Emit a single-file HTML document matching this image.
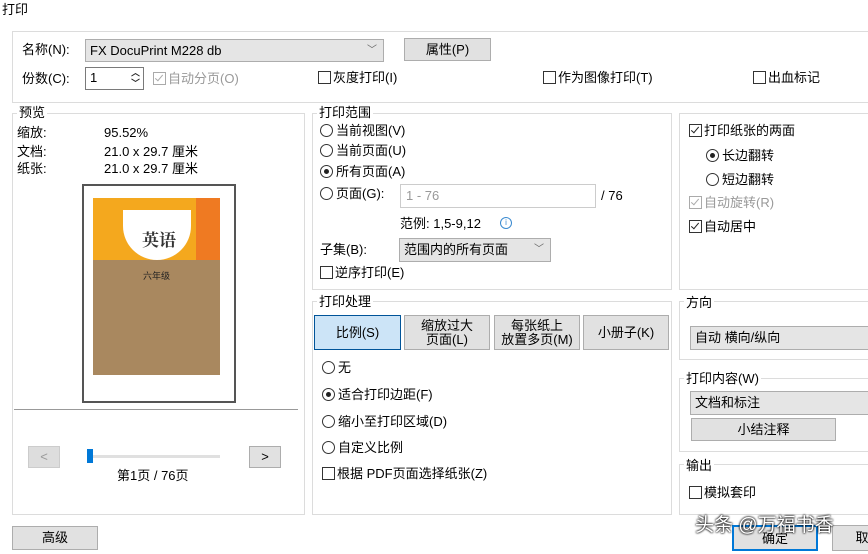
<!DOCTYPE html>
<html><head><meta charset="utf-8"><style>
body{margin:0;width:868px;height:554px;background:#fff;position:relative;overflow:hidden;font-family:"Liberation Sans","Noto Sans CJK SC",sans-serif;font-size:13px;line-height:16px;color:#000}
.a{position:absolute;white-space:nowrap}
.p{position:absolute;border:1px solid #dcdcdc}
.lg{position:absolute;background:#fff;padding:0 2px;font-size:13px}
.btn{position:absolute;background:#e1e1e1;border:1px solid #adadad;text-align:center;box-sizing:border-box}
.cb{display:inline-block;width:11px;height:11px;border:1px solid #333;vertical-align:-2px;margin-right:2px;background:#fff;position:relative}
.rb{display:inline-block;width:11px;height:11px;border:1px solid #333;border-radius:50%;vertical-align:-2px;margin-right:3px;background:#fff;position:relative}
.rb.on:after{content:"";position:absolute;left:3px;top:3px;width:5px;height:5px;border-radius:50%;background:#222}
.cb.on:after{content:"";position:absolute;left:3px;top:0px;width:3px;height:7px;border:solid #222;border-width:0 1.5px 1.5px 0;transform:rotate(40deg)}
.g{color:#999}.g .cb{border-color:#aaa}.g .cb:after{border-color:#aaa}
.sel{position:absolute;background:#e5e5e5;border:1px solid #adadad;box-sizing:border-box;padding-left:4px}
</style></head><body>
<div class="a" style="left:2px;top:2px">打印</div>
<div class="p" style="left:12px;top:31px;width:870px;height:70px"></div>
<div class="a" style="left:22px;top:42px">名称(N):</div>
<div class="sel" style="left:85px;top:39px;width:299px;height:23px;line-height:21px">FX DocuPrint M228 db<span style="position:absolute;right:6px;color:#666;font-size:10px">﹀</span></div>
<div class="btn" style="left:404px;top:38px;width:87px;height:23px;line-height:21px">属性(P)</div>
<div class="a" style="left:22px;top:71px">份数(C):</div>
<div style="position:absolute;left:85px;top:67px;width:59px;height:23px;border:1px solid #7a7a7a;box-sizing:border-box;padding:2px 4px">1<span style="position:absolute;right:3px;top:0;font-size:9px;line-height:10px;color:#222;font-weight:bold">︿<br>﹀</span></div>
<div class="a g" style="left:153px;top:71px"><span class="cb on"></span>自动分页(O)</div>
<div class="a" style="left:318px;top:70px"><span class="cb"></span>灰度打印(I)</div>
<div class="a" style="left:543px;top:70px"><span class="cb"></span>作为图像打印(T)</div>
<div class="a" style="left:753px;top:70px"><span class="cb"></span>出血标记</div>

<div class="p" style="left:12px;top:113px;width:291px;height:400px"></div>
<div class="lg" style="left:17px;top:105px">预览</div>
<div class="a" style="left:17px;top:125px">缩放:</div><div class="a" style="left:104px;top:125px">95.52%</div>
<div class="a" style="left:17px;top:144px">文档:</div><div class="a" style="left:104px;top:144px">21.0 x 29.7 厘米</div>
<div class="a" style="left:17px;top:161px">纸张:</div><div class="a" style="left:104px;top:161px">21.0 x 29.7 厘米</div>
<div style="position:absolute;left:82px;top:184px;width:150px;height:215px;border:2px solid #555;background:#fff"></div>
<div style="position:absolute;left:93px;top:198px;width:127px;height:177px;background:#a9885f"></div>
<div style="position:absolute;left:93px;top:198px;width:127px;height:62px;background:#f4a81e"></div>
<div style="position:absolute;left:196px;top:198px;width:24px;height:62px;background:#ef7a22"></div>
<div style="position:absolute;left:123px;top:210px;width:68px;height:50px;background:#fff;border-radius:0 0 34px 34px"></div>
<div class="a" style="left:142px;top:229px;font-family:'Noto Serif CJK SC',serif;font-weight:bold;font-size:17px;line-height:20px;color:#333">英语</div>
<div class="a" style="left:143px;top:268px;font-size:9px;color:#222">六年级</div>
<div style="position:absolute;left:14px;top:409px;width:284px;height:1px;background:#999"></div>
<div class="btn" style="left:28px;top:446px;width:32px;height:22px;line-height:20px;color:#999;background:#ddd;border-color:#ccc">&lt;</div>
<div style="position:absolute;left:88px;top:455px;width:132px;height:3px;background:#e0e0e0"></div>
<div style="position:absolute;left:87px;top:449px;width:6px;height:14px;background:#0078d7"></div>
<div class="btn" style="left:249px;top:446px;width:32px;height:22px;line-height:20px">&gt;</div>
<div class="a" style="left:117px;top:468px">第1页 / 76页</div>

<div class="p" style="left:312px;top:113px;width:358px;height:175px"></div>
<div class="lg" style="left:317px;top:105px">打印范围</div>
<div class="a" style="left:320px;top:123px"><span class="rb"></span>当前视图(V)</div>
<div class="a" style="left:320px;top:143px"><span class="rb"></span>当前页面(U)</div>
<div class="a" style="left:320px;top:164px"><span class="rb on"></span>所有页面(A)</div>
<div class="a" style="left:320px;top:186px"><span class="rb"></span>页面(G):</div>
<div style="position:absolute;left:400px;top:184px;width:196px;height:24px;border:1px solid #ccc;box-sizing:border-box;padding:3px 5px;color:#999">1 - 76</div>
<div class="a" style="left:601px;top:188px">/ 76</div>
<div class="a" style="left:400px;top:216px">范例: 1,5-9,12</div>
<div class="a" style="left:500px;top:217px;width:10px;height:10px;border:1px solid #3a8ad0;border-radius:50%;font-size:8px;color:#3a8ad0;text-align:center;line-height:10px">i</div>
<div class="a" style="left:320px;top:242px">子集(B):</div>
<div class="sel" style="left:399px;top:238px;width:152px;height:24px;line-height:22px">范围内的所有页面<span style="position:absolute;right:6px;color:#666;font-size:10px">﹀</span></div>
<div class="a" style="left:320px;top:265px"><span class="cb"></span>逆序打印(E)</div>

<div class="p" style="left:679px;top:113px;width:200px;height:175px"></div>
<div class="a" style="left:689px;top:123px"><span class="cb on"></span>打印纸张的两面</div>
<div class="a" style="left:706px;top:148px"><span class="rb on"></span>长边翻转</div>
<div class="a" style="left:706px;top:172px"><span class="rb"></span>短边翻转</div>
<div class="a g" style="left:689px;top:195px"><span class="cb on"></span>自动旋转(R)</div>
<div class="a" style="left:689px;top:219px"><span class="cb on"></span>自动居中</div>

<div class="p" style="left:312px;top:301px;width:358px;height:212px"></div>
<div class="lg" style="left:317px;top:294px">打印处理</div>
<div class="btn" style="left:314px;top:315px;width:87px;height:35px;line-height:33px;background:#cce4f7;border-color:#005499">比例(S)</div>
<div class="btn" style="left:404px;top:315px;width:86px;height:35px;line-height:14px;padding-top:3px">缩放过大<br>页面(L)</div>
<div class="btn" style="left:494px;top:315px;width:86px;height:35px;line-height:14px;padding-top:3px">每张纸上<br>放置多页(M)</div>
<div class="btn" style="left:583px;top:315px;width:86px;height:35px;line-height:33px">小册子(K)</div>
<div class="a" style="left:322px;top:360px"><span class="rb"></span>无</div>
<div class="a" style="left:322px;top:387px"><span class="rb on"></span>适合打印边距(F)</div>
<div class="a" style="left:322px;top:414px"><span class="rb"></span>缩小至打印区域(D)</div>
<div class="a" style="left:322px;top:440px"><span class="rb"></span>自定义比例</div>
<div class="a" style="left:322px;top:466px"><span class="cb"></span>根据 PDF页面选择纸张(Z)</div>

<div class="p" style="left:679px;top:301px;width:200px;height:57px"></div>
<div class="lg" style="left:684px;top:295px">方向</div>
<div class="sel" style="left:690px;top:326px;width:190px;height:24px;line-height:22px">自动 横向/纵向</div>
<div class="p" style="left:679px;top:378px;width:200px;height:72px"></div>
<div class="lg" style="left:684px;top:371px">打印内容(W)</div>
<div class="sel" style="left:690px;top:391px;width:190px;height:24px;line-height:22px">文档和标注</div>
<div class="btn" style="left:691px;top:418px;width:145px;height:23px;line-height:21px">小结注释</div>
<div class="p" style="left:679px;top:464px;width:200px;height:49px"></div>
<div class="lg" style="left:684px;top:458px">输出</div>
<div class="a" style="left:689px;top:485px"><span class="cb"></span>模拟套印</div>

<div class="btn" style="left:12px;top:526px;width:86px;height:24px;line-height:22px">高级</div>
<div class="btn" style="left:732px;top:525px;width:86px;height:26px;line-height:24px;border:2px solid #0078d7">确定</div>
<div class="btn" style="left:832px;top:525px;width:60px;height:26px;line-height:24px">取</div>
<div class="a" style="left:695px;top:515px;font-size:19px;line-height:22px;color:#fff;text-shadow:0 0 2px #000,0 0 2px #000">头条 @万福书香</div>
</body></html>
